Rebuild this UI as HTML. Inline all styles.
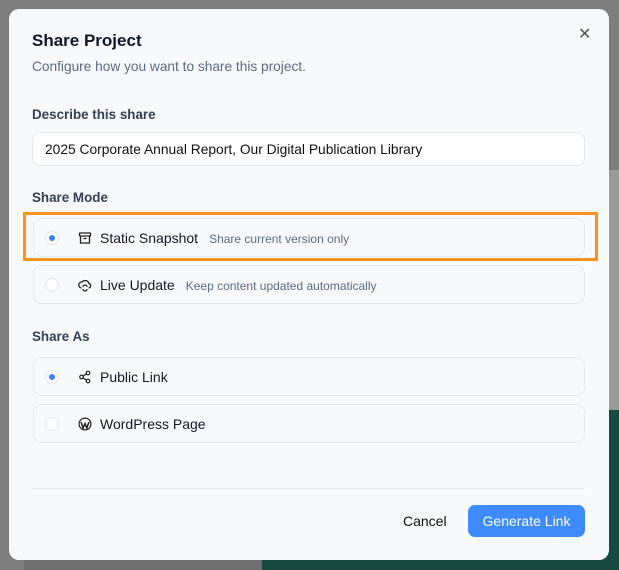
<!DOCTYPE html>
<html><head><meta charset="utf-8"><style>
*{box-sizing:border-box;margin:0;padding:0}
body{width:619px;height:570px;overflow:hidden;position:relative;background:#7d7d7d;font-family:"Liberation Sans",Arial,sans-serif}
.bg1{position:absolute;left:600px;top:170px;width:19px;height:240px;background:#9a9a9a}
.bg2{position:absolute;left:600px;top:410px;width:19px;height:160px;background:#164a40}
.bg3{position:absolute;left:262px;top:540px;width:360px;height:30px;background:#164a40}
.bg4{position:absolute;left:24px;top:540px;width:238px;height:30px;background:#6e6e6e}
.dlg{position:absolute;left:9px;top:9px;width:600px;height:551px;background:#f8f9fb;border-radius:10px}
.t{position:absolute;left:32px;top:31px;font-size:17px;font-weight:bold;color:#0f172a}
.st{position:absolute;left:32px;top:59px;font-size:13.7px;color:#5b6b85}
.lbl{position:absolute;left:32px;font-size:13.4px;font-weight:bold;color:#334155}
.x{position:absolute;left:578px;top:24px;font-size:16px;color:#555}
.inp{position:absolute;left:32px;top:132px;width:553px;height:34px;background:#fff;border:1px solid #e3e7ee;border-radius:8px;font-size:13.8px;color:#111;padding:9px 12px}
.opt{position:absolute;left:33px;width:552px;height:39px;border:1px solid #e3e7ee;border-radius:9px;background:#f8f9fb}
.rad{position:absolute;left:11px;top:12px;width:14px;height:14px;border-radius:50%;border:1px solid #dfe3ea;background:#fff}
.rad.on::after{content:"";position:absolute;left:3px;top:3px;width:6px;height:6px;border-radius:50%;background:#3b82f6}
.ic{position:absolute;left:44px;top:12px}
.nm{position:absolute;left:66px;top:11px;font-size:14px;color:#111827}
.ds{font-size:12px;color:#5b6b85;margin-left:11px}
.hl{position:absolute;left:23px;top:212px;width:575px;height:49px;border:3px solid #f7931e}
.hr{position:absolute;left:32px;top:488px;width:553px;height:1px;background:#e6e9ef}
.cancel{position:absolute;left:403px;top:513px;font-size:14px;color:#111}
.gen{position:absolute;left:468px;top:505px;width:117px;height:32px;background:#3d8bfd;border-radius:7px;color:#fff;font-size:14px;text-align:center;line-height:32px}
</style></head><body>
<div class="bg1"></div><div class="bg2"></div><div class="bg3"></div><div class="bg4"></div>
<div class="dlg"></div>
<div class="t">Share Project</div>
<div class="st">Configure how you want to share this project.</div>
<div class="x">✕</div>
<div class="lbl" style="top:107px">Describe this share</div>
<div class="inp">2025 Corporate Annual Report, Our Digital Publication Library</div>
<div class="lbl" style="top:190px">Share Mode</div>
<div class="opt" style="top:218px"><div class="rad on"></div>
<svg class="ic" width="14" height="14" viewBox="0 0 14 14" fill="none" stroke="#222" stroke-width="1.3"><rect x="1.5" y="2" width="11" height="3" rx=".5"/><path d="M2.5 5v7h9V5M5.5 7.5h3"/></svg>
<div class="nm">Static Snapshot<span class="ds">Share current version only</span></div></div>
<div class="opt" style="top:265px"><div class="rad"></div>
<svg class="ic" width="14" height="14" viewBox="0 0 14 14" fill="none" stroke="#222" stroke-width="1.3"><path d="M3.5 10a3 3 0 0 1 .5-6 4 4 0 0 1 7 1.5 2.3 2.3 0 0 1-.5 4.5"/><path d="M5 9a2 2 0 0 1 4 0M9 11a2 2 0 0 1-4 0"/></svg>
<div class="nm">Live Update<span class="ds">Keep content updated automatically</span></div></div>
<div class="hl"></div>
<div class="lbl" style="top:329px">Share As</div>
<div class="opt" style="top:357px"><div class="rad on"></div>
<svg class="ic" width="14" height="14" viewBox="0 0 14 14" fill="none" stroke="#222" stroke-width="1.2"><circle cx="10" cy="3" r="1.8"/><circle cx="3.5" cy="7" r="1.8"/><circle cx="10" cy="11" r="1.8"/><path d="M5 6.1l3.4-2.2M5 7.9l3.4 2.2"/></svg>
<div class="nm">Public Link</div></div>
<div class="opt" style="top:404px"><div class="rad"></div>
<svg class="ic" width="14" height="14" viewBox="0 0 14 14"><circle cx="7" cy="7" r="6.5" fill="#222"/><circle cx="7" cy="7" r="5.3" fill="#fff"/><path d="M3 5l2.2 6L7 6.5 8.8 11 11 5" stroke="#222" stroke-width="1.5" fill="none"/></svg>
<div class="nm">WordPress Page</div></div>
<div class="hr"></div>
<div class="cancel">Cancel</div>
<div class="gen">Generate Link</div>
</body></html>
